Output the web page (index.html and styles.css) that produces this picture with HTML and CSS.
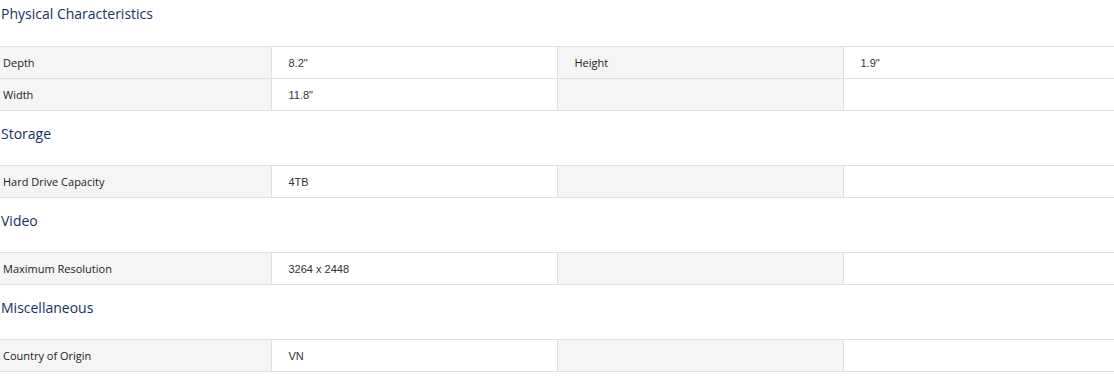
FILE: index.html
```html
<!DOCTYPE html>
<html lang="en">
<head>
<meta charset="utf-8">
<title>Specifications</title>
<link rel="stylesheet" href="styles.css">
</head>
<body>
<div class="specs">
  <section class="spec-group">
    <h3 class="spec-title">Physical Characteristics</h3>
    <table class="spec-table">
      <colgroup><col class="c1"><col class="c2"><col class="c3"><col class="c4"></colgroup>
      <tr><th>Depth</th><td>8.2"</td><th>Height</th><td>1.9"</td></tr>
      <tr><th>Width</th><td>11.8"</td><th></th><td></td></tr>
    </table>
  </section>
  <section class="spec-group">
    <h3 class="spec-title">Storage</h3>
    <table class="spec-table">
      <colgroup><col class="c1"><col class="c2"><col class="c3"><col class="c4"></colgroup>
      <tr><th>Hard Drive Capacity</th><td>4TB</td><th></th><td></td></tr>
    </table>
  </section>
  <section class="spec-group">
    <h3 class="spec-title">Video</h3>
    <table class="spec-table">
      <colgroup><col class="c1"><col class="c2"><col class="c3"><col class="c4"></colgroup>
      <tr><th>Maximum Resolution</th><td>3264 x 2448</td><th></th><td></td></tr>
    </table>
  </section>
  <section class="spec-group">
    <h3 class="spec-title">Miscellaneous</h3>
    <table class="spec-table">
      <colgroup><col class="c1"><col class="c2"><col class="c3"><col class="c4"></colgroup>
      <tr><th>Country of Origin</th><td>VN</td><th></th><td></td></tr>
    </table>
  </section>
</div>
</body>
</html>
```

FILE: styles.css
```css
html, body {
  margin: 0;
  padding: 0;
  background: #fff;
  overflow: hidden;
}

.specs {
  font-family: "Open Sans", "Noto Sans", sans-serif;
  color: #333;
}

.spec-title {
  margin: 0;
  height: 46px;
  padding: 0 0 0 1px;
  box-sizing: border-box;
  font-size: 14px;
  font-weight: 500;
  line-height: 28px;
  color: #143260;
}

.spec-group + .spec-group .spec-title {
  height: 54px;
  padding-top: 9px;
}

.spec-table {
  width: 100%;
  border-collapse: collapse;
  table-layout: fixed;
}

.c1 { width: 271px; }
.c2 { width: 286px; }
.c3 { width: 286px; }

.spec-table th,
.spec-table td {
  height: 31px;
  padding: 0 0 0 17px;
  border-top: 1px solid #e0e0e0;
  border-bottom: 1px solid #e0e0e0;
  font-size: 11px;
  font-weight: 400;
  text-align: left;
  vertical-align: middle;
  color: #333;
}

.spec-table th {
  background: #f5f5f5;
  border-right: 1px solid #e0e0e0;
  font-family: "Open Sans", "Noto Sans", sans-serif;
  color: #222;
}

.spec-table td {
  border-right: 1px solid #e0e0e0;
  font-family: "Liberation Sans", Arial, sans-serif;
}

.spec-table td:last-child {
  border-right: none;
}

.spec-table tr > th:first-child {
  padding-left: 3px;
}
```
